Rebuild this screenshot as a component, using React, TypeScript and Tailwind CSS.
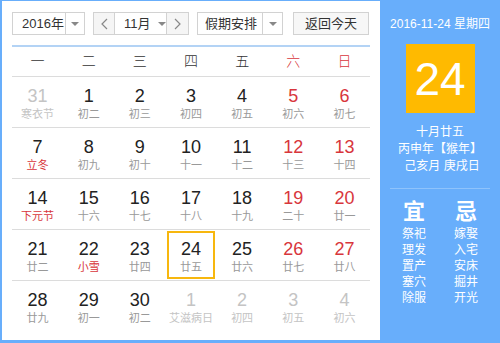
import React from "react";

type Day = { n: number; lunar: string; red?: boolean; lunarRed?: boolean; muted?: boolean; today?: boolean };

const weekdays = ["一", "二", "三", "四", "五", "六", "日"];

const weeks: Day[][] = [
  [
    { n: 31, lunar: "寒衣节", muted: true },
    { n: 1, lunar: "初二" },
    { n: 2, lunar: "初三" },
    { n: 3, lunar: "初四" },
    { n: 4, lunar: "初五" },
    { n: 5, lunar: "初六", red: true },
    { n: 6, lunar: "初七", red: true },
  ],
  [
    { n: 7, lunar: "立冬", lunarRed: true },
    { n: 8, lunar: "初九" },
    { n: 9, lunar: "初十" },
    { n: 10, lunar: "十一" },
    { n: 11, lunar: "十二" },
    { n: 12, lunar: "十三", red: true },
    { n: 13, lunar: "十四", red: true },
  ],
  [
    { n: 14, lunar: "下元节", lunarRed: true },
    { n: 15, lunar: "十六" },
    { n: 16, lunar: "十七" },
    { n: 17, lunar: "十八" },
    { n: 18, lunar: "十九" },
    { n: 19, lunar: "二十", red: true },
    { n: 20, lunar: "廿一", red: true },
  ],
  [
    { n: 21, lunar: "廿二" },
    { n: 22, lunar: "小雪", lunarRed: true },
    { n: 23, lunar: "廿四" },
    { n: 24, lunar: "廿五", today: true },
    { n: 25, lunar: "廿六" },
    { n: 26, lunar: "廿七", red: true },
    { n: 27, lunar: "廿八", red: true },
  ],
  [
    { n: 28, lunar: "廿九" },
    { n: 29, lunar: "初一" },
    { n: 30, lunar: "初二" },
    { n: 1, lunar: "艾滋病日", muted: true },
    { n: 2, lunar: "初四", muted: true },
    { n: 3, lunar: "初五", muted: true },
    { n: 4, lunar: "初六", muted: true },
  ],
];

const yi = ["祭祀", "理发", "置产", "塞穴", "除服"];
const ji = ["嫁娶", "入宅", "安床", "掘井", "开光"];

function Caret() {
  return <span className="h-0 w-0 border-x-[4px] border-t-[4px] border-x-transparent border-t-[#888]" />;
}

function Chevron({ dir }: { dir: "left" | "right" }) {
  return (
    <svg width="7" height="12" viewBox="0 0 7 12" fill="none" stroke="#888" strokeWidth="1.2">
      {dir === "left" ? <polyline points="6,1 1,6 6,11" /> : <polyline points="1,1 6,6 1,11" />}
    </svg>
  );
}

export default function App() {
  return (
    <div
      className="flex h-[343px] w-[500px] bg-[#68aefb] text-[#333]"
      style={{ fontFamily: '"Liberation Sans", "Noto Sans CJK SC", sans-serif' }}
    >
      {/* Calendar */}
      <div className="mb-[3px] ml-[2px] mt-[1px] flex w-[378px] flex-col bg-white px-[10px]">
        {/* Toolbar */}
        <div className="mt-[11px] flex h-[23px] items-stretch text-[13px]">
          <div className="flex w-[73px] items-stretch border border-[#d2d2d2]">
            <span className="flex w-[52px] items-center pl-[9px]">2016年</span>
            <span className="flex flex-1 items-center justify-center border-l border-[#d2d2d2]">
              <Caret />
            </span>
          </div>
          <div className="ml-[8px] flex w-[96px] items-stretch border border-[#d2d2d2]">
            <span className="flex w-[20px] items-center justify-center bg-[#f5f5f5]">
              <Chevron dir="left" />
            </span>
            <span className="flex flex-1 items-center gap-[7px] border-x border-[#d2d2d2] pl-[9px]">
              11月
              <Caret />
            </span>
            <span className="flex w-[21px] items-center justify-center bg-[#f5f5f5]">
              <Chevron dir="right" />
            </span>
          </div>
          <div className="ml-[8px] flex w-[86px] items-stretch border border-[#d2d2d2]">
            <span className="flex w-[64px] items-center pl-[7px]">假期安排</span>
            <span className="flex flex-1 items-center justify-center border-l border-[#d2d2d2]">
              <Caret />
            </span>
          </div>
          <div className="ml-[10px] flex w-[76px] items-center justify-center border border-[#d2d2d2] bg-[#f7f7f7]">
            返回今天
          </div>
        </div>

        <div className="mt-[10px] h-[2px] bg-[#b3d3f5]" />

        {/* Weekdays */}
        <div className="grid h-[30px] grid-cols-7 border-b border-[#dcdcdc] text-[14px] font-light">
          {weekdays.map((w, i) => (
            <div key={w} className={`flex items-center justify-center ${i >= 5 ? "text-[#d8363c]" : ""}`}>
              {w}
            </div>
          ))}
        </div>

        {/* Days */}
        {weeks.map((week, r) => (
          <div key={r} className={`grid h-[51px] grid-cols-7 ${r < 4 ? "border-b border-[#dcdcdc]" : ""}`}>
            {week.map((d, c) => {
              const numColor = d.muted ? "text-[#c4c4c4]" : d.red ? "text-[#d8363c]" : "text-[#222]";
              const lunarColor = d.muted ? "text-[#c4c4c4]" : d.lunarRed ? "text-[#d8363c]" : "text-[#999]";
              return (
                <div key={c} className="flex justify-center">
                  <div
                    className={`flex w-[48px] flex-col items-center ${
                      d.today ? "my-[1px] border-2 border-[#f7b70e] pt-[6px]" : "pt-[9px]"
                    }`}
                  >
                    <span className={`text-[18px] leading-[20px] ${numColor}`}>{d.n}</span>
                    <span className={`mt-[1px] whitespace-nowrap text-[11px] leading-[14px] ${lunarColor}`}>
                      {d.lunar}
                    </span>
                  </div>
                </div>
              );
            })}
          </div>
        ))}
      </div>

      {/* Today panel */}
      <div className="flex flex-1 flex-col items-center text-white">
        <div className="mt-[16px] text-[12px] leading-[16px]">2016-11-24 星期四</div>
        <div className="mt-[12px] flex h-[69px] w-[69px] items-center justify-center bg-[#ffba00] text-[46px] leading-none">
          24
        </div>
        <div className="mt-[11px] flex flex-col items-center text-[12px] leading-[17px]">
          <span>十月廿五</span>
          <span>丙申年【猴年】</span>
          <span className="pl-[4px]">己亥月 庚戌日</span>
        </div>
        <div className="mt-[13px] h-px w-[100px] bg-[#8ec3fc]" />
        <div className="mt-[11px] flex">
          {[
            { title: "宜", items: yi },
            { title: "忌", items: ji },
          ].map((col) => (
            <div key={col.title} className="flex w-[52px] flex-col items-center">
              <span className="text-[22px] font-bold leading-[24px]">{col.title}</span>
              <div className="mt-[2px] flex flex-col items-center text-[12px] leading-[16px]">
                {col.items.map((t) => (
                  <span key={t}>{t}</span>
                ))}
              </div>
            </div>
          ))}
        </div>
      </div>
    </div>
  );
}
